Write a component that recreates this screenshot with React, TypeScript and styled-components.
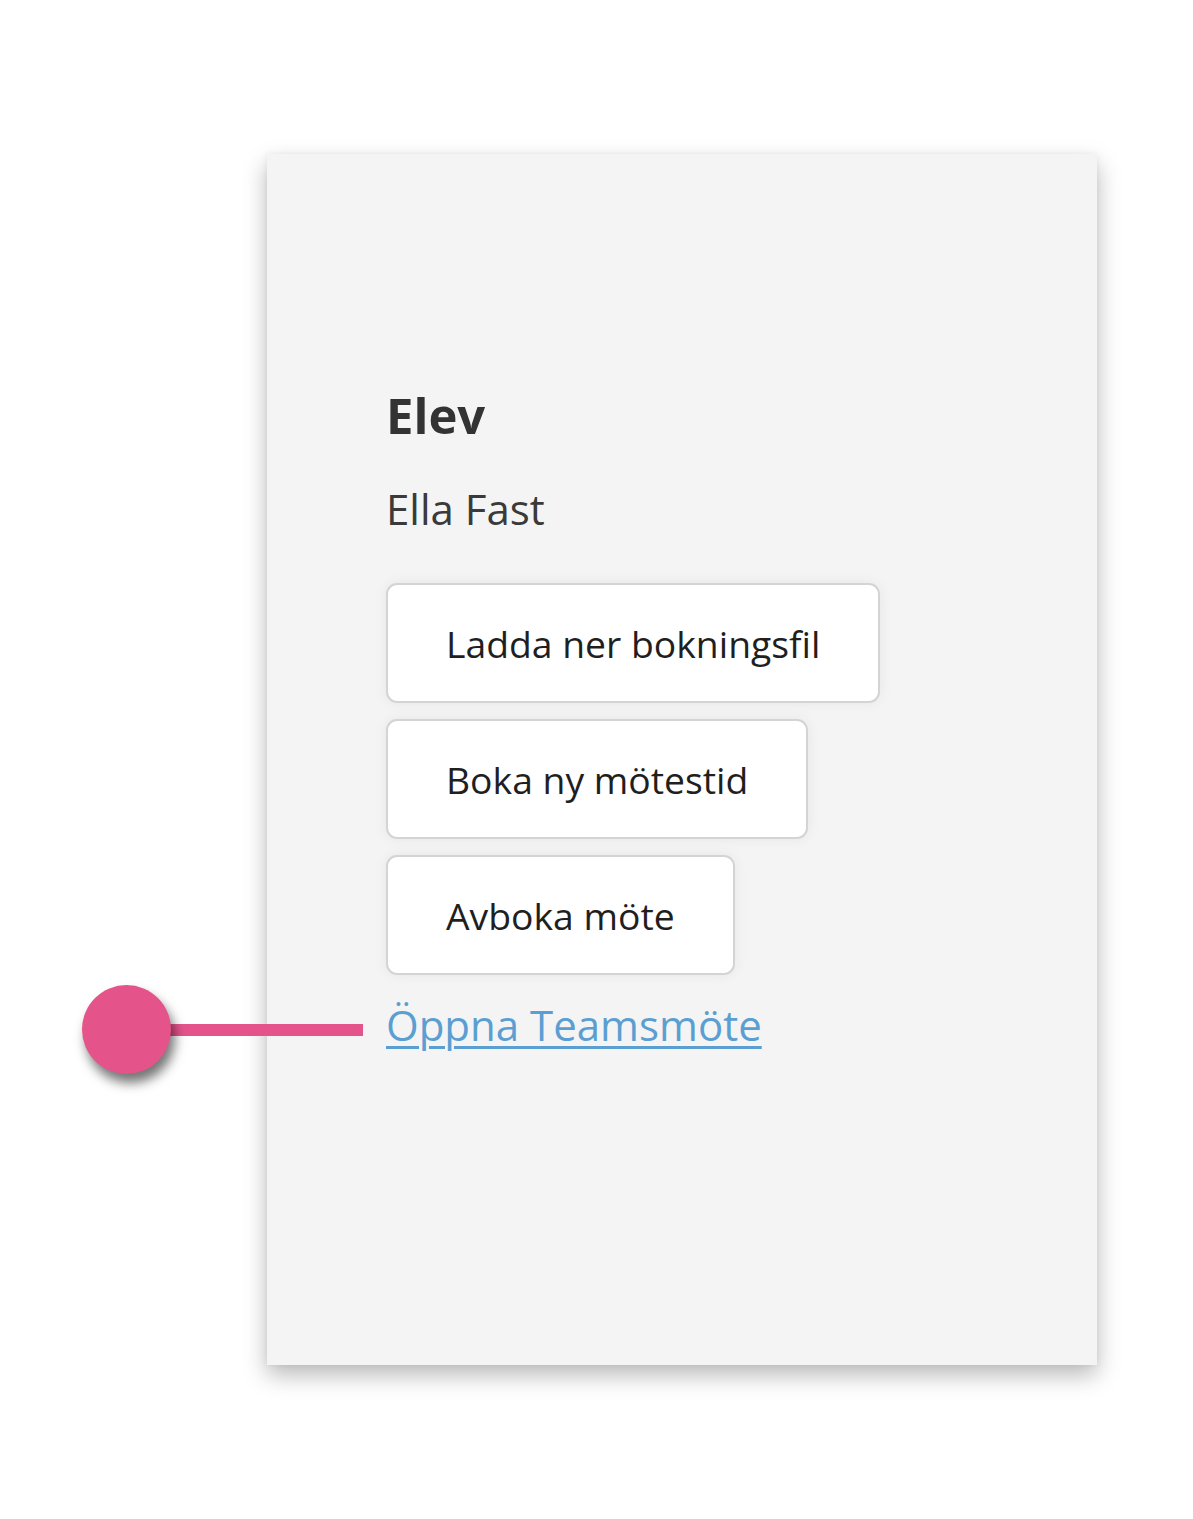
import React from 'react';
import styled, { createGlobalStyle } from 'styled-components';

const GlobalStyle = createGlobalStyle`
  html, body {
    margin: 0;
    padding: 0;
    background: #ffffff;
  }
  body {
    font-family: 'Open Sans', 'Noto Sans', sans-serif;
    color: #333333;
  }
`;

const Page = styled.div`
  position: relative;
  width: 1193px;
  height: 1519px;
  overflow: hidden;
`;

const Card = styled.section`
  margin: 154px 0 0 267px;
  width: 830px;
  height: 1211px;
  box-sizing: border-box;
  padding: 237px 0 0 119px;
  background: #f4f4f4;
  box-shadow: 0 10px 22px rgba(0, 0, 0, 0.28), 0 0 6px rgba(0, 0, 0, 0.05);
  display: flex;
  flex-direction: column;
  align-items: flex-start;
`;

const Title = styled.h2`
  margin: 0;
  font-size: 49px;
  line-height: 48px;
  font-weight: 700;
  color: #333333;
`;

const Name = styled.p`
  margin: 50px 0 0;
  font-size: 42px;
  line-height: 40px;
  color: #3a3a3a;
`;

const Actions = styled.div`
  margin-top: 54px;
  display: flex;
  flex-direction: column;
  align-items: flex-start;
  gap: 16px;
`;

const ActionButton = styled.button`
  height: 120px;
  box-sizing: border-box;
  padding: 0 58px;
  background: #ffffff;
  border: 2px solid #d4d4d4;
  border-radius: 11px;
  box-shadow: 0 0 14px rgba(0, 0, 0, 0.06);
  font-family: 'Open Sans', 'Noto Sans', sans-serif;
  font-size: 37.3px;
  color: #1f1f1f;
  cursor: pointer;
`;

const TeamsLink = styled.a`
  margin-top: 30px;
  font-size: 42px;
  line-height: 40px;
  color: #5b9fd2;
  text-decoration: underline;
  text-decoration-thickness: 3px;
  text-underline-offset: 5px;
  cursor: pointer;
`;

/* annotation marker pointing at the link */
const Marker = styled.div`
  position: absolute;
  left: 82px;
  top: 985px;
  display: flex;
  align-items: center;
`;

const Dot = styled.div`
  width: 89px;
  height: 89px;
  border-radius: 50%;
  background: #e4548b;
  box-shadow: 4px 9px 12px rgba(0, 0, 0, 0.55);
  position: relative;
  z-index: 1;
`;

const Line = styled.div`
  width: 200px;
  height: 12px;
  margin-left: -8px;
  background: #e4548b;
`;

const App = () => {
  return (
    <Page>
      <GlobalStyle />
      <Card>
        <Title>Elev</Title>
        <Name>Ella Fast</Name>
        <Actions>
          <ActionButton>Ladda ner bokningsfil</ActionButton>
          <ActionButton>Boka ny mötestid</ActionButton>
          <ActionButton>Avboka möte</ActionButton>
        </Actions>
        <TeamsLink href="#">Öppna Teamsmöte</TeamsLink>
      </Card>
      <Marker>
        <Dot />
        <Line />
      </Marker>
    </Page>
  );
};

export default App;
